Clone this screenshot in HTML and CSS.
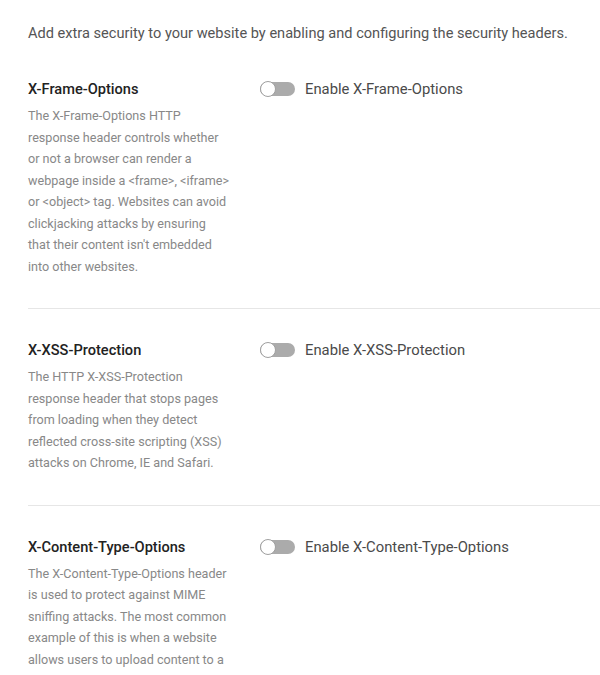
FILE: index.html
```html
<!DOCTYPE html>
<html lang="en">
<head>
<meta charset="utf-8">
<title>Security headers</title>
<link rel="stylesheet" href="styles.css">
</head>
<body>
<main class="page">
  <p class="intro">Add extra security to your website by enabling and configuring the security headers.</p>

  <section class="row">
    <div class="info">
      <h3 class="title">X-Frame-Options</h3>
      <p class="desc">The X-Frame-Options HTTP response header controls whether or not a browser can render a webpage inside a &lt;frame&gt;, &lt;iframe&gt; or &lt;object&gt; tag. Websites can avoid clickjacking attacks by ensuring that their content isn't embedded into other websites.</p>
    </div>
    <label class="control">
      <span class="toggle"><span class="knob"></span></span>
      <span class="label">Enable X-Frame-Options</span>
    </label>
  </section>

  <section class="row">
    <div class="info">
      <h3 class="title">X-XSS-Protection</h3>
      <p class="desc">The HTTP X-XSS-Protection response header that stops pages from loading when they detect reflected cross-site scripting (XSS) attacks on Chrome, IE and Safari.</p>
    </div>
    <label class="control">
      <span class="toggle"><span class="knob"></span></span>
      <span class="label">Enable X-XSS-Protection</span>
    </label>
  </section>

  <section class="row">
    <div class="info">
      <h3 class="title">X-Content-Type-Options</h3>
      <p class="desc">The X-Content-Type-Options header is used to protect against MIME sniffing attacks. The most common example of this is when a website allows users to upload content to a website, however the user disguises a particular file type as something else.</p>
    </div>
    <label class="control">
      <span class="toggle"><span class="knob"></span></span>
      <span class="label">Enable X-Content-Type-Options</span>
    </label>
  </section>
</main>
</body>
</html>
```

FILE: styles.css
```css
html, body {
  margin: 0;
  padding: 0;
  background: #ffffff;
}

body {
  font-family: Roboto, "Liberation Sans", sans-serif;
  color: #333;
}

.page {
  padding-left: 28px;
  padding-top: 22px;
}

.intro {
  margin: 0 0 35px 0;
  font-size: 14.6px;
  line-height: 22px;
  color: #555;
}

.row {
  display: grid;
  grid-template-columns: 232px 1fr;
  padding: 0 0 31px 0;
  border-bottom: 1px solid #e6e6e6;
  margin-bottom: 31px;
}

.title {
  margin: 0;
  font-size: 14.6px;
  line-height: 20px;
  font-weight: 500;
  color: #222;
}

.desc {
  margin: 6px 0 0 0;
  font-size: 12.6px;
  line-height: 21.5px;
  color: #888;
  width: 202px;
}

.control {
  display: flex;
  align-items: center;
  gap: 10px;
  height: 20px;
}

.toggle {
  position: relative;
  width: 35px;
  height: 14px;
  border-radius: 7px;
  background: #ababab;
  flex: none;
}

.knob {
  position: absolute;
  left: 0;
  top: -1px;
  width: 14px;
  height: 14px;
  border-radius: 50%;
  background: #fff;
  border: 1px solid #a0a0a0;
}

.label {
  font-size: 14.8px;
  font-weight: 400;
  color: #4a4a4a;
}
```
